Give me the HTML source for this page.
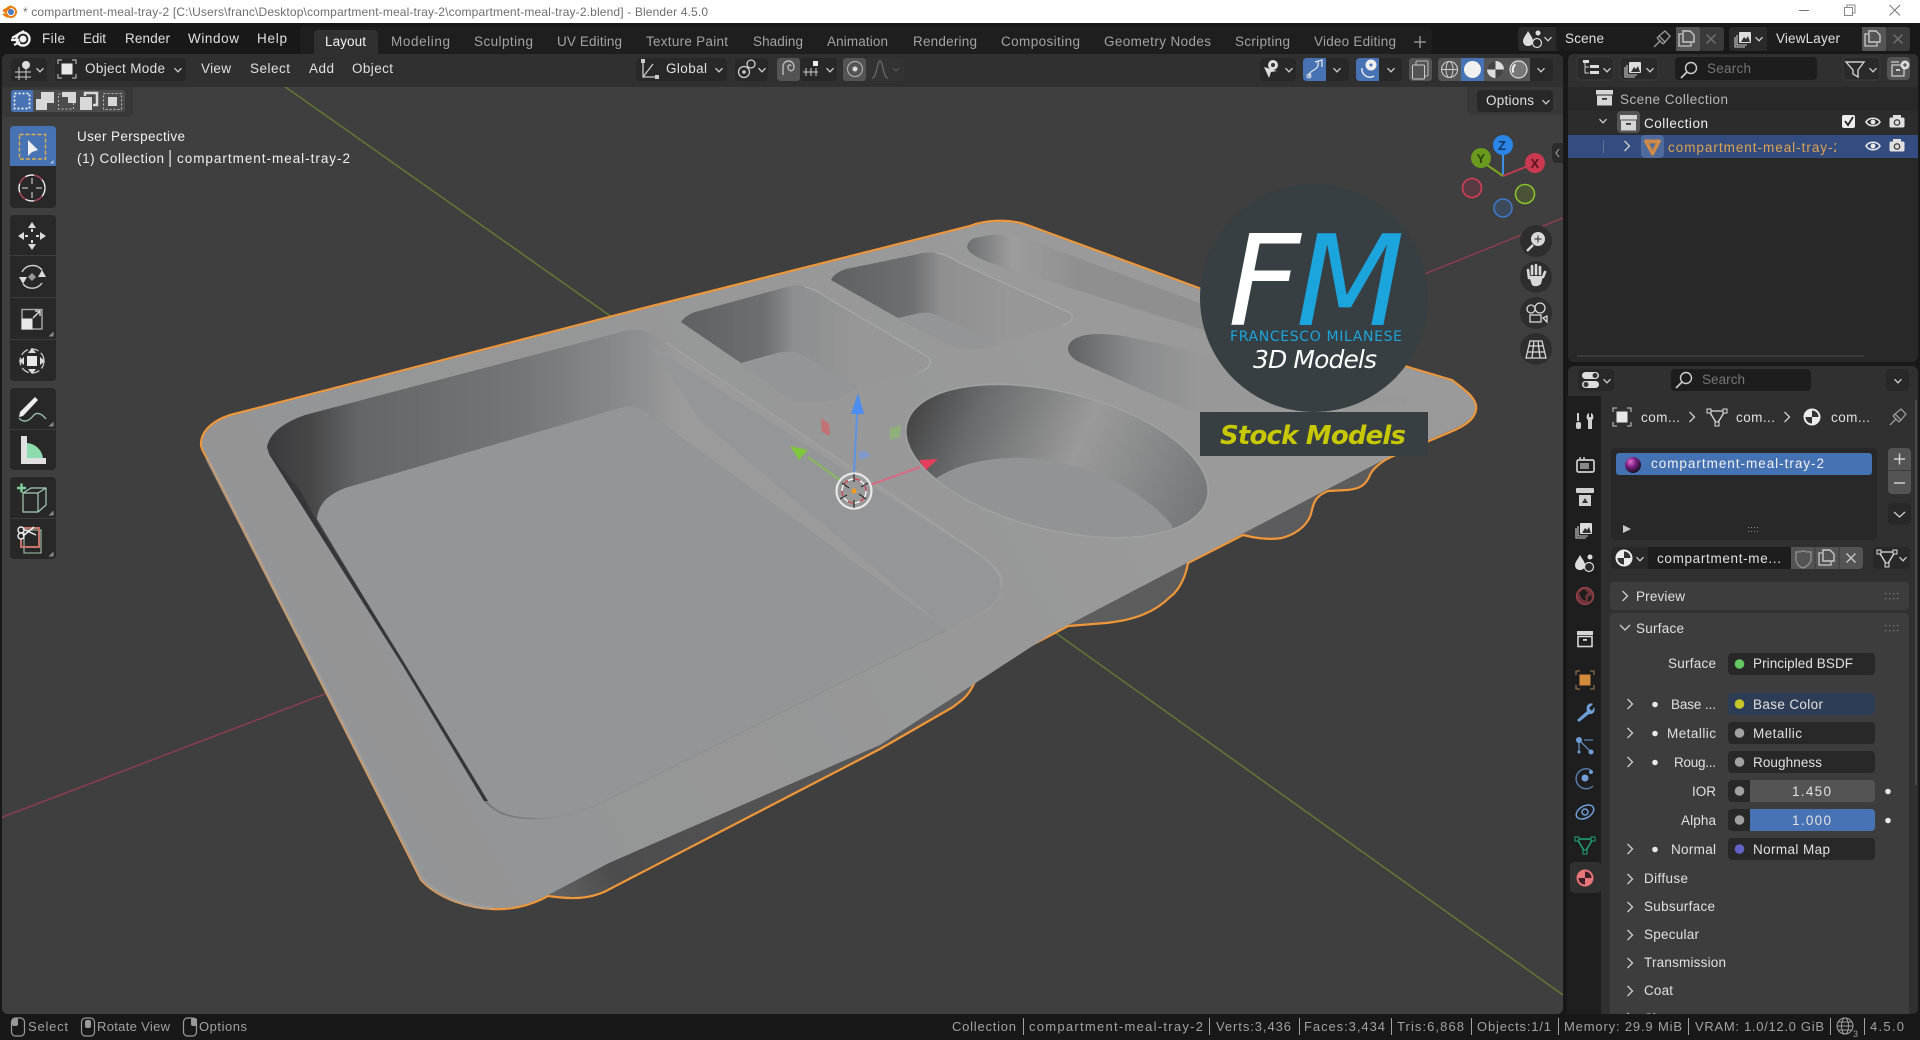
<!DOCTYPE html>
<html><head><meta charset="utf-8"><title>compartment-meal-tray-2 - Blender 4.5.0</title>
<style>
html,body{margin:0;padding:0;background:#181818;overflow:hidden}
svg{display:block;position:absolute;left:0;top:0}
text{font-family:"Liberation Sans",sans-serif;font-size:13.5px;fill:#d4d4d4;white-space:pre}
.m{fill:#e0e0e0}.tab{fill:#a3a3a3;font-size:13.5px}.dim{fill:#757575}.st{fill:#a2a2a2;font-size:13px}
.w{fill:#f0f0f0}
.i{fill:none;stroke:#d0d0d0;stroke-width:1.4}.f{fill:#d8d8d8;stroke:none}
</style></head><body>
<svg width="1920" height="1040" viewBox="0 0 1920 1040" xmlns="http://www.w3.org/2000/svg">
<defs>
<clipPath id="vp"><rect x="2" y="54" width="1561" height="960" rx="6"/></clipPath>
<clipPath id="cl"><rect x="1660" y="135" width="176" height="24"/></clipPath>
<clipPath id="pc"><rect x="1601" y="396" width="317" height="618"/></clipPath>
<linearGradient id="wall" gradientUnits="userSpaceOnUse" x1="270" y1="0" x2="680" y2="0"><stop offset="0" stop-color="#3b3b3d"/><stop offset=".1" stop-color="#474748"/><stop offset=".22" stop-color="#656667"/><stop offset=".6" stop-color="#747576"/><stop offset=".85" stop-color="#88898b"/><stop offset="1" stop-color="#9b9b9b"/></linearGradient>
<linearGradient id="w1" gradientUnits="userSpaceOnUse" x1="685" y1="0" x2="860" y2="0"><stop offset="0" stop-color="#606162"/><stop offset=".45" stop-color="#6e6f70"/><stop offset=".62" stop-color="#8d8e8f"/><stop offset="1" stop-color="#979797"/></linearGradient>
<linearGradient id="w2" gradientUnits="userSpaceOnUse" x1="832" y1="0" x2="1010" y2="0"><stop offset="0" stop-color="#5f6061"/><stop offset=".45" stop-color="#6f7071"/><stop offset=".62" stop-color="#909091"/><stop offset="1" stop-color="#979797"/></linearGradient>
<linearGradient id="w3" gradientUnits="userSpaceOnUse" x1="967" y1="0" x2="1080" y2="0"><stop offset="0" stop-color="#6e6f70"/><stop offset=".4" stop-color="#9d9d9d"/><stop offset="1" stop-color="#8f8f90"/></linearGradient>
<linearGradient id="w4" gradientUnits="userSpaceOnUse" x1="1068" y1="0" x2="1200" y2="0"><stop offset="0" stop-color="#616263"/><stop offset=".5" stop-color="#8a8b8c"/><stop offset="1" stop-color="#989898"/></linearGradient>
<linearGradient id="wc" gradientUnits="userSpaceOnUse" x1="906" y1="430" x2="1208" y2="480"><stop offset="0" stop-color="#454546"/><stop offset=".2" stop-color="#6a6b6c"/><stop offset=".55" stop-color="#9a9a9a"/><stop offset=".85" stop-color="#828384"/><stop offset="1" stop-color="#767778"/></linearGradient>
<linearGradient id="top" gradientUnits="userSpaceOnUse" x1="200" y1="800" x2="1100" y2="300"><stop offset="0" stop-color="#929394"/><stop offset="1" stop-color="#9a9a9a"/></linearGradient>
<linearGradient id="edge" gradientUnits="userSpaceOnUse" x1="520" y1="900" x2="1380" y2="500"><stop offset="0" stop-color="#6e6e6f"/><stop offset=".1" stop-color="#4c4c4d"/><stop offset=".55" stop-color="#5e5e5f"/><stop offset="1" stop-color="#5c5c5d"/></linearGradient>
<radialGradient id="sph" cx=".35" cy=".3" r=".75"><stop offset="0" stop-color="#e070d0"/><stop offset=".45" stop-color="#7a1f80"/><stop offset="1" stop-color="#10101a"/></radialGradient>
<path id="cd" d="M-3.5,-1.8 L0,1.8 L3.5,-1.8" fill="none" stroke="#cfcfcf" stroke-width="1.3"/>
<path id="cr" d="M-2.5,-5 L2.5,0 L-2.5,5" fill="none" stroke="#cfcfcf" stroke-width="1.3"/>
<g id="eye"><path d="M-7,0 C-4,-5 4,-5 7,0 C4,5 -4,5 -7,0Z" fill="none" stroke="#e8e8e8" stroke-width="1.6"/><circle r="2.4" fill="#e8e8e8"/></g>
<g id="cam"><rect x="-7.5" y="-4.5" width="15" height="10" rx="1.5" fill="#e0e0e0"/><rect x="-4" y="-7" width="8" height="3" fill="#e0e0e0"/><circle r="3.4" cy=".5" fill="#444"/><circle r="2" cy=".5" fill="#ddd"/></g>
<g id="coll"><rect x="-8" y="-8" width="17" height="4.500" fill="#d6d6d6"/><rect x="-7" y="-2.500" width="15" height="10" fill="#d6d6d6"/><rect x="-2" y="0" width="5" height="1.800" fill="#333"/></g>
<g id="tri"><path d="M-8,-6 L8,-6 L0,7 Z" fill="none" stroke="#ddd" stroke-width="1.3"/><rect x="-10" y="-8" width="4" height="4" fill="#333" stroke="#ddd"/><rect x="6" y="-8" width="4" height="4" fill="#333" stroke="#ddd"/><rect x="-2" y="5" width="4" height="4" fill="#333" stroke="#ddd"/></g>
<g id="mat"><circle r="8.500" fill="#ececec"/><path d="M0,0 L0,-6.500 A6.500,6.500 0 0 1 6.500,0 Z" fill="#333"/><path d="M0,0 L0,6.500 A6.500,6.500 0 0 1 -6.500,0 Z" fill="#333"/></g>
<g id="dup"><path d="M-5,-5 L-8,-5 L-8,7 L4,7 L4,4" fill="none" stroke="#c8c8c8" stroke-width="1.3"/><path d="M-4,-8 L3,-8 L7,-4 L7,3 L-4,3Z" fill="none" stroke="#c8c8c8" stroke-width="1.4"/></g>
<path id="x" d="M-4.500,-4.500 L4.500,4.500 M4.500,-4.500 L-4.500,4.500" fill="none" stroke="#c8c8c8" stroke-width="1.4"/>
<path id="pin" d="M-8,8 L-2,2 M-5,-1 L1,5 M-3,-3 L3,-8 L8,-3 L3,3 Z M-5,-1 L-3,-3 M1,5 L3,3" fill="none" stroke="#9a9a9a" stroke-width="1.3"/>
<g id="mag"><circle cx="2" cy="-2" r="5.500" fill="none" stroke="#cfcfcf" stroke-width="1.4"/><path d="M-2,2 L-8,8" stroke="#cfcfcf" stroke-width="1.6"/></g>
<g id="vl"><rect x="-5" y="-7" width="12" height="11" rx="1" fill="#ddd"/><path d="M-3,3 L0,-2 L2,0 L4,-3 L6,3Z" fill="#333"/><path d="M-7,-4 L-7,6 L3,6 M-9,-2 L-9,8 L1,8" fill="none" stroke="#ccc" stroke-width="1.1"/></g>
<g id="scn"><path d="M-5,-8 C-2,-3 0,-1 0,2 C0,6 -3,7 -5,7 C-8,7 -10,5 -10,2 C-10,-1 -7,-4 -5,-8Z" fill="#ddd"/><circle cx="4" cy="4" r="4.500" fill="#282828" stroke="#ddd" stroke-width="1.200"/><circle cx="5" cy="-6" r="2.500" fill="#ddd"/></g>
<g id="objm"><path d="M-9,-5 V-9 H-5 M5,-9 H9 V-5 M9,5 V9 H5 M-5,9 H-9 V5" fill="none" stroke="#aaa" stroke-width="1.300"/><rect x="-5.500" y="-5.500" width="11" height="11" fill="#e8e8e8"/></g>
<g id="grip" fill="#7a7a7a"><rect x="-10" y="-3" width="1.300" height="1.300"/><rect x="-6" y="-3" width="1.300" height="1.300"/><rect x="-2" y="-3" width="1.300" height="1.300"/><rect x="2" y="-3" width="1.300" height="1.300"/><rect x="-10" y="2" width="1.300" height="1.300"/><rect x="-6" y="2" width="1.300" height="1.300"/><rect x="-2" y="2" width="1.300" height="1.300"/><rect x="2" y="2" width="1.300" height="1.300"/></g>
<path id="corner" d="M2.500,-2.500 L2.500,2.500 L-2.500,2.500 Z" fill="#8a8a8a"/>
<g id="mouse"><rect x="-6.500" y="-9" width="13" height="18" rx="4" fill="none" stroke="#9a9a9a" stroke-width="1.200"/></g>
</defs>

<!-- base -->
<rect width="1920" height="1040" fill="#181818"/>
<rect width="1920" height="23" fill="#fff"/>
<!-- title bar -->
<g transform="translate(10,12)"><circle r="3" cx="1" cy="0" fill="#4a7cc0"/><circle r="5" cx="1" fill="none" stroke="#e87d0d" stroke-width="2"/><path d="M-7,-1 L1,-6 M-7,2 L-2,5 M-6,0 L0,-4" stroke="#e87d0d" stroke-width="2"/></g>
<text x="23" y="16" style="font-size:12px;fill:#6e6e6e" textLength="685">* compartment-meal-tray-2 [C:\Users\franc\Desktop\compartment-meal-tray-2\compartment-meal-tray-2.blend] - Blender 4.5.0</text>
<path d="M1799,10.500 H1809" stroke="#777" stroke-width="1"/>
<rect x="1844.500" y="7.500" width="8" height="8" fill="#fff" stroke="#888"/><path d="M1847,7 V5 H1855 V13 H1853" fill="none" stroke="#888"/>
<path d="M1889.500,5 L1900,15.500 M1900,5 L1889.500,15.500" stroke="#777" stroke-width="1"/>

<!-- top bar -->
<g transform="translate(21,39)"><circle r="3.500" cx="2" fill="#f0f0f0"/><circle r="6.500" cx="2" fill="none" stroke="#f0f0f0" stroke-width="2.400"/><path d="M-9,-1 L3,-8 M-10,1 L-2,1 M-7,6 L-1,3" stroke="#f0f0f0" stroke-width="2.200"/></g>
<text class="m" x="42" y="43" textLength="23">File</text>
<text class="m" x="83" y="43" textLength="23">Edit</text>
<text class="m" x="125" y="43" textLength="45">Render</text>
<text class="m" x="188" y="43" textLength="51">Window</text>
<text class="m" x="257" y="43" textLength="30">Help</text>
<rect x="300" y="27" width="1132" height="27" rx="3" fill="#1e1e1e"/>
<path d="M314,54 V34 Q314,30 318,30 H374 Q378,30 378,34 V54Z" fill="#303030"/>
<text x="325" y="46" class="m" style="fill:#f2f2f2" textLength="41">Layout</text>
<text class="tab" x="391" y="46" textLength="59">Modeling</text>
<text class="tab" x="474" y="46" textLength="59">Sculpting</text>
<text class="tab" x="557" y="46" textLength="65">UV Editing</text>
<text class="tab" x="646" y="46" textLength="82">Texture Paint</text>
<text class="tab" x="753" y="46" textLength="50">Shading</text>
<text class="tab" x="827" y="46" textLength="61">Animation</text>
<text class="tab" x="913" y="46" textLength="64">Rendering</text>
<text class="tab" x="1001" y="46" textLength="79">Compositing</text>
<text class="tab" x="1104" y="46" textLength="107">Geometry Nodes</text>
<text class="tab" x="1235" y="46" textLength="55">Scripting</text>
<text class="tab" x="1314" y="46" textLength="82">Video Editing</text>
<path d="M1414,42 H1426 M1420,36 V48" stroke="#a0a0a0" stroke-width="1.300"/>

<!-- scene selectors -->
<rect x="1518" y="27" width="206" height="24" rx="4" fill="#2a2a2a"/>
<use href="#scn" x="1533" y="39"/><use href="#cd" x="1548" y="39"/>
<rect x="1556" y="27" width="120" height="24" fill="#1d1d1d"/>
<text class="m" x="1565" y="43" textLength="39">Scene</text>
<use href="#pin" x="1662" y="39"/>
<rect x="1676" y="27" width="24" height="24" fill="#555"/><use href="#dup" x="1687" y="39"/>
<rect x="1700" y="27" width="24" height="24" rx="3" fill="#3a3a3a"/><use href="#x" x="1711" y="39" opacity=".4"/>
<rect x="1729" y="27" width="181" height="24" rx="4" fill="#2a2a2a"/>
<use href="#vl" x="1744" y="39"/><use href="#cd" x="1759" y="39"/>
<rect x="1767" y="27" width="95" height="24" fill="#1d1d1d"/>
<text class="m" x="1776" y="43" textLength="64">ViewLayer</text>
<rect x="1862" y="27" width="24" height="24" fill="#555"/><use href="#dup" x="1873" y="39"/>
<rect x="1886" y="27" width="24" height="24" rx="3" fill="#3a3a3a"/><use href="#x" x="1898" y="39" opacity=".4"/>

<!-- VIEWPORT -->
<rect x="2" y="54" width="1561" height="960" rx="6" fill="#3f3f3f"/>
<g clip-path="url(#vp)">
<path d="M284,86 L650,344" stroke="#5f7537" stroke-width="1.600"/>
<path d="M1053,631 L1563,995" stroke="#5f7537" stroke-width="1.600"/>
<path d="M0,818 L330,692" stroke="#853e4e" stroke-width="1.600"/>
<path d="M1400,284 L1563,218" stroke="#853e4e" stroke-width="1.600"/>

<!-- tray silhouette with side walls -->
<path d="M201,444 C201,430 215,418 238,413 L640,309 L970,226 C985,220 1010,218 1030,226 L1199,288 L1408,367 L1452,380 C1468,392 1478,400 1476,410 C1474,420 1465,425 1455,430 L1391,457 C1380,462 1372,470 1370,475 C1366,485 1360,489 1347,490 L1328,491 C1318,495 1314,500 1312,510 C1310,522 1300,533 1282,538 C1270,540 1255,538 1243,535 L1188,563 C1186,575 1180,590 1170,597 C1155,612 1135,620 1106,623 L1068,626 L1051,635 L980,672 C975,680 972,692 962,700 L953,707 L880,749 L604,892 C590,898 575,900 548,896 C530,906 510,910 492,909 C470,908 440,900 421,880 L327,694 L207,458 C203,452 201,448 201,444Z" fill="url(#edge)" stroke="#f0973a" stroke-width="2.200" stroke-linejoin="round"/>
<!-- top face -->
<path d="M202,444 C202,431 216,419 238,414 L640,310 L970,227 C985,221 1010,219 1030,227 L1199,289 L1408,368 L1452,381 C1467,393 1477,400 1475,410 C1473,419 1464,424 1454,429 L1391,456 L1051,634 L880,745 L609,863 L548,895 C530,905 510,909 492,908 C470,907 441,899 422,879 L328,694 L208,458 C204,452 202,448 202,444Z" fill="url(#top)"/>
<path d="M207,458 L328,694 L422,879 C441,899 470,907 492,908" fill="none" stroke="#a2a3a4" stroke-width="4" opacity=".55"/>

<!-- large compartment -->
<path d="M267,447 C270,432 285,422 305,415 L625,331 C640,327 655,332 667,343 L969,547 C990,562 1002,570 1002,585 C1002,600 995,605 985,612 L947,630 L626,790 C600,805 570,818 533,819 C510,819 497,815 484,801 L403,666 L314,525 L269,454Z" fill="url(#wall)"/>
<path d="M650,345 L969,549 C988,562 1000,572 1000,585 C1000,598 993,604 983,611 L947,630 L700,420Z" fill="#959697"/>
<path d="M317,519 C318,505 327,495 345,488 L620,408 C630,405 640,406 650,415 L947,630 L600,805 C575,817 540,820 520,817 C505,815 495,810 486,800Z" fill="#949596"/>
<path d="M269,454 L403,666 L484,801 L488,801 L405,664 L316,520 L300,490Z" fill="#363638"/>
<path d="M667,343 L969,547 C990,562 1002,570 1002,585" fill="none" stroke="#a8a9a9" stroke-width="1.500" opacity=".6"/>
<path d="M947,630 L626,790 C600,805 570,818 533,819 C515,819 500,815 488,803" fill="none" stroke="#89898a" stroke-width="1.400" opacity=".45"/>
<path d="M650,415 L947,630" fill="none" stroke="#8f9090" stroke-width="1" opacity=".3"/>

<!-- compartment 1 -->
<path d="M681,322 C684,317 690,314 695,312 L783,288 C793,285 800,285 805,287 C815,289 820,293 826,297 L928,357 C932,361 932,368 917,373 L859,387 C840,398 825,404 815,402 C800,402 793,400 788,398 L741,363Z" fill="url(#w1)"/>
<path d="M741,363 L777,353 C785,351 793,351 799,353 L859,387 C840,398 825,404 815,402 C800,402 793,400 788,398Z" fill="#949596"/>
<path d="M805,287 C815,289 820,293 826,297 L928,357 C932,361 932,368 917,373" fill="none" stroke="#a6a7a7" stroke-width="1.300"/>
<!-- compartment 2 -->
<path d="M831,280 C834,274 840,271 846,269 L914,255 C925,252 930,252 936,253 C945,254 952,258 958,262 L1068,312 C1075,316 1074,322 1062,325 L999,343 C985,349 975,350 965,349 C960,349 956,348 953,347 L898,318Z" fill="url(#w2)"/>
<path d="M898,318 L920,313 C928,312 932,313 936,315 L999,343 C985,349 975,350 965,349 C960,349 956,348 953,347Z" fill="#949596"/>
<path d="M936,253 C945,254 952,258 958,262 L1068,312 C1075,316 1074,322 1062,325" fill="none" stroke="#a6a7a7" stroke-width="1.300"/>
<!-- compartment 3 -->
<path d="M967,247 C968,241 972,238 980,237 C990,234 1010,234 1024,238 L1240,318 L1210,332 L991,263 C978,258 968,253 967,247Z" fill="url(#w3)"/>
<!-- compartment 4 -->
<path d="M1068,348 C1069,342 1074,338 1082,336 C1092,333 1110,333 1134,338 L1405,398 C1410,404 1405,410 1397,407 L1188,410 L1079,362 C1072,358 1068,354 1068,348Z" fill="url(#w4)"/>
<!-- round compartment -->
<ellipse cx="1057" cy="461" rx="154" ry="68" transform="rotate(14 1057 461)" fill="url(#wc)"/>
<clipPath id="ec"><ellipse cx="1057" cy="461" rx="154" ry="68" transform="rotate(14 1057 461)"/></clipPath>
<path clip-path="url(#ec)" d="M922,490 C945,466 985,456 1030,458 C1090,463 1140,488 1172,525 L1172,560 L922,560Z" fill="#929394"/>
<ellipse cx="1057" cy="461" rx="155" ry="69" transform="rotate(14 1057 461)" fill="none" stroke="#a5a6a6" stroke-width="1.400" opacity=".6"/>

<!-- 3D gizmo -->
<path d="M854,473 L857,413" stroke="#5f93e8" stroke-width="2"/><path d="M858,393 L851,414 L864,414Z" fill="#4c8df0"/>
<path d="M840,480 L808,457" stroke="#89b95a" stroke-width="2"/><path d="M790,446 L808,450 L799,460Z" fill="#7fc63c"/>
<path d="M870,485 L920,467" stroke="#d86a82" stroke-width="2"/><path d="M938,459 L919,460 L926,470Z" fill="#e43f5c"/>
<path d="M821,418 L829,424 L830,436 L822,432Z" fill="#c96a6f" opacity=".85"/>
<path d="M890,428 L901,425 L900,437 L890,440Z" fill="#8fb378" opacity=".9"/>
<path d="M858,452 L865,451 L871,456 L860,460Z" fill="#7c98d6" opacity=".85"/>
<circle cx="854" cy="491" r="17.500" fill="#a3a3a3" fill-opacity=".3" stroke="#e8e8e8" stroke-width="2.200"/>
<circle cx="854" cy="491" r="12" fill="none" stroke="#fff" stroke-width="1.200" stroke-dasharray="7 5.500"/>
<circle cx="854" cy="491" r="12" fill="none" stroke="#d8404c" stroke-width="1.200" stroke-dasharray="5.500 7" stroke-dashoffset="-7"/>
<path d="M854,474 V482 M854,500 V508 M840,499 L847,495 M861,487 L868,483 M842,483 L849,488 M859,494 L866,499" stroke="#111" stroke-width="1"/>
<circle cx="854" cy="491" r="2.500" fill="#f59a1c"/>

<!-- logo -->
<circle cx="1314" cy="298" r="114" fill="#373f43"/>
<rect x="1200" y="412" width="228" height="44" fill="#373f43"/>
<text x="1228" y="325" style="font-family:'DejaVu Sans',sans-serif;font-style:italic;font-size:126px;fill:#fff">F</text>
<text x="1296" y="325" style="font-family:'DejaVu Sans',sans-serif;font-style:italic;font-size:126px;fill:#1ca5dc">M</text>
<text x="1230" y="341" textLength="172" style="font-family:'DejaVu Sans',sans-serif;font-size:14px;fill:#1ca5dc">FRANCESCO MILANESE</text>
<text x="1253" y="368" textLength="124" style="font-family:'DejaVu Sans',sans-serif;font-style:italic;font-size:25px;fill:#fff">3D Models</text>
<text x="1220" y="444" textLength="186" style="font-family:'DejaVu Sans',sans-serif;font-style:italic;font-weight:bold;font-size:26px;fill:#c8c800">Stock Models</text>

<!-- header bg -->
<rect x="0" y="54" width="1565" height="33" fill="#303030"/>
<path d="M0,87 H133 V111 Q133,117 127,117 H0Z" fill="#383838"/>
<path d="M1563,87 H1467 V109 Q1467,115 1473,115 H1563Z" fill="#383838"/>

<!-- header buttons -->
<rect x="11" y="58" width="36" height="23" rx="4" fill="#282828"/>
<g transform="translate(24,69)"><path d="M-9,3 H7 M-9,8 H7 M-5,-2 V11 M2,-2 V11" fill="none" stroke="#ccc"/><circle cx="2" cy="-4" r="4" fill="#ddd"/></g>
<use href="#cd" x="40" y="70"/>
<rect x="55" y="58" width="131" height="23" rx="4" fill="#282828"/>
<use href="#objm" x="67" y="69"/>
<text class="m" x="85" y="73" textLength="80">Object Mode</text><use href="#cd" x="178" y="70"/>
<text class="m" x="201" y="73" textLength="30">View</text>
<text class="m" x="250" y="73" textLength="40">Select</text>
<text class="m" x="309" y="73" textLength="25">Add</text>
<text class="m" x="352" y="73" textLength="41">Object</text>
<rect x="636" y="58" width="91" height="23" rx="4" fill="#282828"/>
<path d="M643,62 V77 H657 M643,77 L653,64" fill="none" stroke="#ccc" stroke-width="1.300"/><rect x="641" y="59" width="4" height="4" fill="#ccc"/><rect x="655" y="75" width="4" height="4" fill="#ccc"/>
<text class="m" x="666" y="73" textLength="41">Global</text><use href="#cd" x="719" y="70"/>
<rect x="735" y="58" width="33" height="23" rx="4" fill="#282828"/>
<circle cx="744" cy="72" r="5.500" fill="none" stroke="#ccc" stroke-width="1.300"/><circle cx="744" cy="72" r="1.800" fill="#ccc"/><circle cx="751" cy="64" r="4" fill="none" stroke="#ccc" stroke-width="1.300"/><use href="#cd" x="762" y="70"/>
<rect x="777" y="58" width="23" height="23" rx="3" fill="#545454"/>
<path d="M783,75 V67 C783,59 794,59 794,67 C794,72 788,72 788,67 C788,65 790,64 791,66" fill="none" stroke="#bbb" stroke-width="1.400"/>
<rect x="800" y="58" width="37" height="23" rx="3" fill="#282828"/>
<path d="M803,72 H818 M806,68 V76 M811,68 V76 M816,68 V76" stroke="#ccc"/><rect x="813" y="61" width="5" height="5" fill="#eee"/><use href="#cd" x="830" y="70"/>
<rect x="843" y="58" width="23" height="23" rx="3" fill="#545454"/><circle cx="855" cy="69" r="7.500" fill="none" stroke="#aaa" stroke-width="1.200"/><circle cx="855" cy="69" r="2.500" fill="#ddd"/>
<rect x="866" y="58" width="38" height="23" rx="3" fill="#333"/>
<path d="M872,78 C877,78 877,61 880,61 C883,61 883,78 888,78" fill="none" stroke="#6a6a6a" stroke-width="1.300"/><path d="M893,68 L896,71 L899,68" fill="none" stroke="#5e5e5e"/>
<rect x="1260" y="58" width="36" height="23" rx="4" fill="#282828"/>
<circle cx="1273" cy="65" r="5" fill="#ddd"/><circle cx="1273" cy="65" r="2" fill="#333"/><path d="M1264,67 L1269,78 L1271,72 L1277,71Z" fill="#ddd"/><use href="#cd" x="1289" y="70"/>
<rect x="1303" y="58" width="46" height="23" rx="4" fill="#282828"/>
<path d="M1303,62 Q1303,58 1307,58 H1326 V81 H1307 Q1303,81 1303,77Z" fill="#4772b3"/>
<path d="M1309,77 C1309,68 1320,72 1318,61 M1315,62 L1322,60 L1322,67" fill="none" stroke="#e8e8e8" stroke-width="1.200"/><circle cx="1309" cy="76" r="2" fill="none" stroke="#e8e8e8"/><use href="#cd" x="1337" y="70"/>
<rect x="1356" y="58" width="46" height="23" rx="4" fill="#282828"/>
<path d="M1356,62 Q1356,58 1360,58 H1379 V81 H1360 Q1356,81 1356,77Z" fill="#4772b3"/>
<circle cx="1371" cy="65" r="5.500" fill="#eee"/><circle cx="1371" cy="65" r="1.500" fill="#4772b3"/><path d="M1362,68 A8,8 0 0 0 1374,76" fill="none" stroke="#eee" stroke-width="1.400"/><use href="#cd" x="1391" y="70"/>
<rect x="1409" y="58" width="23" height="23" rx="3" fill="#545454"/>
<rect x="1416" y="61" width="12" height="15" rx="1" fill="none" stroke="#bbb"/><rect x="1412.500" y="65" width="12" height="14" rx="1" fill="#545454" stroke="#ccc"/>
<rect x="1438" y="58" width="115" height="23" rx="4" fill="#282828"/>
<path d="M1438,62 Q1438,58 1442,58 H1461 V81 H1442 Q1438,81 1438,77Z" fill="#545454"/>
<rect x="1461" y="58" width="23" height="23" fill="#4772b3"/><rect x="1484" y="58" width="46" height="23" fill="#545454"/>
<g transform="translate(1449.500,69.500)"><circle r="8" fill="none" stroke="#ccc" stroke-width="1.100"/><ellipse rx="3.500" ry="8" fill="none" stroke="#ccc" stroke-width="1"/><path d="M-8,0 H8" stroke="#ccc"/></g>
<circle cx="1472.500" cy="69.500" r="8.500" fill="#f0f0f0"/>
<g transform="translate(1495.500,69.500)"><circle r="8.500" fill="#ddd"/><path d="M0,-8.500 A8.500,8.500 0 0 0 -8.500,0 L0,0Z M0,0 L0,8.500 A8.500,8.500 0 0 0 8.500,0Z" fill="#444"/></g>
<g transform="translate(1518.500,69.500)"><circle r="8.500" fill="#777" stroke="#ddd" stroke-width="1.200"/><path d="M-3,-5 A6,6 0 0 0 -5,3" fill="none" stroke="#eee" stroke-width="2"/></g>
<use href="#cd" x="1541" y="70"/>
<rect x="1477" y="90" width="76" height="22" rx="4" fill="#282828"/>
<text class="m" x="1486" y="105" textLength="48">Options</text><use href="#cd" x="1546" y="102"/>

<!-- select mode -->
<rect x="11" y="90" width="114" height="22" rx="3" fill="#4c4c4c"/>
<path d="M11,93 Q11,90 14,90 H33 V112 H14 Q11,112 11,109Z" fill="#4772b3"/>
<rect x="14.500" y="93.500" width="15" height="15" fill="none" stroke="#f4f4f4" stroke-width="1.700" stroke-dasharray="2 2"/>
<path d="M36,110 V99 H41 V92 H54 V103 H47 V110H36Z" fill="#d8d8d8"/>
<rect x="58.500" y="94" width="15" height="15" fill="none" stroke="#bbb" stroke-dasharray="2 2"/><path d="M62,92 H76 V103 H68 V97 H62Z" fill="#d8d8d8"/>
<rect x="80" y="97" width="12" height="13" fill="#d8d8d8"/><path d="M85,96 V93 H97 V105 H93" fill="none" stroke="#d8d8d8" stroke-width="2.500"/>
<rect x="103.500" y="93.500" width="18" height="16" fill="none" stroke="#bbb" stroke-dasharray="2 2"/><rect x="108" y="97" width="9" height="9" fill="#d8d8d8"/>

<!-- overlay text -->
<text class="w" x="77" y="141" textLength="108">User Perspective</text>
<text class="w" x="77" y="163" textLength="87">(1) Collection</text>
<rect x="169.500" y="150" width="1.200" height="17" fill="#f0f0f0"/>
<text class="w" x="177" y="163" textLength="173">compartment-meal-tray-2</text>

<!-- toolbar -->
<rect x="10" y="126" width="46" height="82" rx="4" fill="#282828"/>
<path d="M10,130 Q10,126 14,126 H52 Q56,126 56,130 V166 H10Z" fill="#4772b3"/>
<rect x="19.500" y="134.500" width="26" height="24.500" fill="none" stroke="#dfb050" stroke-width="1.400" stroke-dasharray="4 2"/>
<path d="M28,140 V156 L32,152 L38,150Z" fill="#f0f0f0"/><path d="M53.500,163.500 V160 L50,163.500Z" fill="#b8cbe6"/>
<circle cx="32" cy="188" r="13" fill="none" stroke="#eee" stroke-width="1.400" stroke-dasharray="9 9"/>
<circle cx="32" cy="188" r="13" fill="none" stroke="#b24a58" stroke-width="1.400" stroke-dasharray="9 9" stroke-dashoffset="9"/>
<path d="M32,178 V184 M32,192 V198 M22,188 H28 M36,188 H42" stroke="#bbb" stroke-width="1.300"/>
<rect x="10" y="215" width="46" height="166" rx="4" fill="#282828"/>
<path d="M10,255.500 H56 M10,297.500 H56 M10,339.500 H56" stroke="#3c3c3c"/>
<g fill="#dcdcdc"><path d="M32,222 L28,228 H36Z M32,250 L28,244 H36Z M18,236 L24,232 V240Z M46,236 L40,232 V240Z"/><path d="M31,229 h2 v3 h-2Z M31,240 h2 v3 h-2Z M25,235 h3 v2 h-3Z M36,235 h3 v2 h-3Z"/></g>
<path d="M22,272 A12,12 0 0 1 42,270 M42,283 A12,12 0 0 1 23,284" fill="none" stroke="#d0d0d0" stroke-width="1.400"/><path d="M32,273 L36,277 L32,281 L28,277Z" fill="#999"/><path d="M42,270 L38,277 H46Z M23,284 L19,277 H27Z" fill="#dcdcdc"/>
<rect x="22" y="309.500" width="20" height="19.500" fill="none" stroke="#aaa" stroke-width="1.400"/><rect x="21.500" y="318.500" width="11" height="11" fill="#e8e8e8"/><path d="M33,318 L40,311 M35,311 H40 V316" fill="none" stroke="#e8e8e8" stroke-width="1.300"/><use href="#corner" x="51" y="334"/>
<circle cx="32" cy="361" r="12" fill="none" stroke="#ccc" stroke-width="1.300" stroke-dasharray="8 3"/><rect x="27" y="356" width="10" height="10" fill="#e8e8e8"/><path d="M32,348 L28,353 H36Z M32,374 L28,369 H36Z M19,361 L24,357 V365Z M45,361 L40,357 V365Z" fill="#dcdcdc"/>
<rect x="10" y="388" width="46" height="82" rx="4" fill="#282828"/><path d="M10,429.500 H56" stroke="#3c3c3c"/>
<path d="M20,412 L35,397 L38,400 L23,416 L19,417Z" fill="#eee"/><path d="M19,418 C24,424 30,420 33,416 C37,411 42,414 46,419" fill="none" stroke="#9ec7ac" stroke-width="1.300"/><use href="#corner" x="51" y="424"/>
<path d="M27,443 A17,17 0 0 1 43,459 H27Z" fill="#8ddcb0"/>
<path d="M21,436 H27 V458 H46 V464 H21Z" fill="#e0e0e0"/>
<rect x="10" y="477" width="46" height="82" rx="4" fill="#282828"/><path d="M10,518.500 H56" stroke="#3c3c3c"/>
<path d="M23,493 H38 V512 H23Z M23,493 L31,488 H46 V505 L38,512 M38,493 L46,488" fill="none" stroke="#a6cbb4" stroke-width="1.200"/><path d="M17,488 H26 M21.500,483.500 V492.500" stroke="#7fd09a" stroke-width="2.400"/><use href="#corner" x="51" y="513"/>
<path d="M24,530 H41 V553 H24Z" fill="none" stroke="#a9c5b0" stroke-width="1.100"/><path d="M21,528 H39 V547 H21Z" fill="none" stroke="#c8736c" stroke-width="2"/><circle cx="21" cy="530" r="3" fill="#282828" stroke="#eee" stroke-width="1.400"/><circle cx="21" cy="536" r="3" fill="#282828" stroke="#eee" stroke-width="1.400"/><path d="M23,529 L36,535 M23,536 L34,527" stroke="#eee" stroke-width="1.500"/><use href="#corner" x="51" y="554"/>

<!-- nav gizmo -->
<path d="M1503,176 V155" stroke="#3b8fe6" stroke-width="2"/>
<path d="M1503,176 L1487,165" stroke="#7da51e" stroke-width="2"/>
<path d="M1503,176 L1528,166" stroke="#c23a50" stroke-width="2"/>
<circle cx="1503" cy="145" r="10" fill="#2a85e6"/><text x="1498" y="150" style="font-size:13px;font-weight:bold;fill:#123a66">Z</text>
<circle cx="1481" cy="158" r="10" fill="#6a9a1e"/><text x="1476.500" y="163" style="font-size:13px;font-weight:bold;fill:#2d4408">Y</text>
<circle cx="1535" cy="163" r="10" fill="#c93a50"/><text x="1530.500" y="168" style="font-size:13px;font-weight:bold;fill:#5b1320">X</text>
<circle cx="1472" cy="188" r="9.500" fill="#5a3a42" stroke="#d63e58" stroke-width="1.600"/>
<circle cx="1525" cy="194" r="9.500" fill="#4a5238" stroke="#8cc12c" stroke-width="1.600"/>
<circle cx="1503" cy="208" r="9" fill="#3c4a5c" stroke="#3f78c8" stroke-width="1.600"/>
<path d="M1552,148 Q1552,143 1557,143 H1563 V163 H1557 Q1552,163 1552,158Z" fill="#2c2c2c"/><path d="M1559,149 L1556,153 L1559,157" fill="none" stroke="#aaa"/>
<circle cx="1536" cy="241" r="16" fill="#2e2e2e"/>
<circle cx="1538" cy="239" r="7" fill="#d8d8d8"/><path d="M1533,245 L1527,251" stroke="#d8d8d8" stroke-width="2.400"/><path d="M1534.500,239 H1541.500 M1538,235.500 V242.500" stroke="#444" stroke-width="1.200"/>
<circle cx="1536" cy="277" r="16" fill="#2e2e2e"/>
<path d="M1529,278 L1528,270 M1532,274 V266 M1536,274 V265 M1540,274 V267 M1543,277 L1545,272" stroke="#d8d8d8" stroke-width="2.600" stroke-linecap="round"/><path d="M1529,276 H1543 L1541,284 Q1536,288 1532,285Z" fill="#d8d8d8"/>
<circle cx="1536" cy="313" r="16" fill="#2e2e2e"/>
<g fill="none" stroke="#d8d8d8" stroke-width="1.300"><circle cx="1531" cy="309" r="4"/><circle cx="1540" cy="308" r="5"/><rect x="1530" y="315" width="11" height="7"/><path d="M1543,318 L1547,316 V322Z"/></g>
<circle cx="1536" cy="349" r="16" fill="#2e2e2e"/>
<path d="M1530,341 H1542 L1546,358 H1526Z M1534,341 L1532,358 M1538,341 L1540,358 M1529,346 H1543 M1527,352 H1545" fill="none" stroke="#d8d8d8" stroke-width="1.300"/>
</g>

<!-- OUTLINER -->
<rect x="1568" y="54" width="350" height="308" rx="6" fill="#282828"/>
<path d="M1568,60 Q1568,54 1574,54 H1912 Q1918,54 1918,60 V87 H1568Z" fill="#303030"/>
<rect x="1577" y="57" width="37" height="23" rx="4" fill="#2a2a2a" stroke="#3a3a3a"/>
<path d="M1585,62 V73 H1589 M1585,67 H1589" fill="none" stroke="#ccc"/><rect x="1583" y="60" width="6" height="3" fill="#ddd"/><rect x="1590" y="65" width="9" height="3" fill="#ddd"/><rect x="1590" y="71" width="9" height="3" fill="#ddd"/><use href="#cd" x="1607" y="70"/>
<rect x="1620" y="57" width="38" height="23" rx="4" fill="#2a2a2a" stroke="#3a3a3a"/><use href="#vl" x="1634" y="69"/><use href="#cd" x="1650" y="70"/>
<rect x="1675" y="57" width="142" height="23" rx="4" fill="#1d1d1d"/><use href="#mag" x="1689" y="70"/>
<text class="dim" x="1707" y="73" textLength="44">Search</text>
<rect x="1843" y="57" width="37" height="23" rx="4" fill="#2a2a2a" stroke="#3a3a3a"/><path d="M1846,62 H1864 L1858,70 V77 L1853,74 V70Z" fill="none" stroke="#ccc" stroke-width="1.400"/><use href="#cd" x="1873" y="70"/>
<rect x="1887" y="57" width="23" height="23" rx="4" fill="#545454"/><path d="M1892,65 H1904 V76 H1892Z M1891,62 H1899" fill="none" stroke="#ccc" stroke-width="1.300"/><rect x="1896" y="69" width="4" height="2" fill="#ccc"/><circle cx="1905" cy="65" r="4.500" fill="#ddd"/><path d="M1903,65 h4 M1905,63 v4" stroke="#333"/>
<use href="#coll" x="1604" y="98"/>
<text x="1620" y="104" style="fill:#b8b8b8" textLength="108">Scene Collection</text>
<rect x="1568" y="111" width="350" height="24" fill="#2c2c2c"/>
<use href="#cd" x="1603" y="121"/>
<rect x="1617" y="111" width="23" height="22" rx="4" fill="#545454"/><use href="#coll" x="1628" y="123"/>
<text x="1644" y="128" style="fill:#eee" textLength="64">Collection</text>
<rect x="1842" y="115" width="13" height="13" rx="2" fill="#eee"/><path d="M1845,121 L1848,125 L1853,117" fill="none" stroke="#222" stroke-width="1.800"/>
<use href="#eye" x="1873" y="122"/><use href="#cam" x="1897" y="122"/>
<rect x="1568" y="135" width="350" height="23" fill="#334d80"/>
<path d="M1603.500,140 V153" stroke="#5d7099"/>
<use href="#cr" x="1627" y="146"/>
<rect x="1641" y="135" width="23" height="23" rx="4" fill="#4f6a9c"/><path d="M1645.500,141 H1659.500 L1652.500,154Z" fill="#b9884a" stroke="#d08a4a" stroke-width="3" stroke-linejoin="round"/><path d="M1649.500,143.500 H1655.500 L1652.500,149.500Z" fill="#4f6a9c"/>
<g clip-path="url(#cl)"><text x="1668" y="152" style="fill:#e0a24c" textLength="173">compartment-meal-tray-2</text></g>
<use href="#eye" x="1873" y="146"/><use href="#cam" x="1897" y="146"/>
<rect x="1577" y="355" width="287" height="2" fill="#3a3a3a"/>

<!-- PROPERTIES -->
<rect x="1568" y="366" width="350" height="648" rx="6" fill="#303030"/>
<rect x="1567" y="396" width="34" height="618" fill="#1e1e1e"/>
<rect x="1578" y="369" width="36" height="22" rx="4" fill="#282828"/>
<rect x="1582" y="372" width="17" height="7" rx="3.500" fill="#ddd"/><circle cx="1595" cy="375.500" r="2.500" fill="#333"/><rect x="1582" y="381" width="17" height="7" rx="3.500" fill="#ddd"/><circle cx="1586" cy="384.500" r="2.500" fill="#333"/><use href="#cd" x="1607" y="381"/>
<rect x="1671" y="369" width="140" height="22" rx="4" fill="#1d1d1d"/><use href="#mag" x="1684" y="380"/>
<text class="dim" x="1702" y="384" textLength="43">Search</text>
<rect x="1886" y="369" width="23" height="22" rx="4" fill="#282828"/><use href="#cd" x="1898" y="381"/>

<!-- nav tabs -->
<rect x="1570" y="862" width="31" height="31" rx="4" fill="#303030"/>
<g transform="translate(1585,421)"><path d="M4,-8 C1,-7 1,-2 3,-1 V8 H7 V-1 C9,-2 9,-7 6,-8 V-4 H4Z" fill="#d0d0d0"/><rect x="-8" y="-8" width="2" height="8" fill="#d0d0d0"/><rect x="-9" y="1" width="5" height="7" rx="2" fill="#d0d0d0"/></g>
<g transform="translate(1585,465)"><rect x="-8" y="-5" width="17" height="12" rx="1.500" fill="none" stroke="#d0d0d0" stroke-width="1.700"/><path d="M-5,-5 V-8 M-1,-5 V-8" stroke="#d0d0d0" stroke-width="1.500"/><rect x="-5" y="-2" width="9" height="6" fill="#d0d0d0" opacity=".6"/></g>
<g transform="translate(1585,497)"><rect x="-9" y="-9" width="18" height="5" rx="1" fill="#d0d0d0"/><rect x="-6" y="-2" width="12" height="11" fill="#d0d0d0"/><path d="M-3,6 L0,1 L3,6Z" fill="#333"/></g>
<use href="#vl" x="1585" y="530"/>
<use href="#scn" x="1585" y="563"/>
<g transform="translate(1585,596)"><circle r="8.500" fill="#6e343a" stroke="#a0444c" stroke-width="1.200"/><path d="M-6,-3 L-1,-7 L3,-3 L0,0 L1,5 L-3,3Z M3,1 L7,-1 L6,4 L3,6Z" fill="#1d1d1d"/></g>
<g transform="translate(1585,639)"><rect x="-8" y="-8" width="16" height="4" fill="#d6d6d6"/><rect x="-7" y="-2.500" width="14" height="10" fill="none" stroke="#d6d6d6" stroke-width="1.600"/><rect x="-2" y="0" width="4" height="1.800" fill="#d6d6d6"/></g>
<g transform="translate(1585,680)"><path d="M-9,-5 V-9 H-5 M5,-9 H9 V-5 M9,5 V9 H5 M-5,9 H-9 V5" fill="none" stroke="#8a6a48" stroke-width="1.300"/><rect x="-5.500" y="-5.500" width="11" height="11" fill="#d48a3c"/></g>
<path d="M1577,720 L1587,711 C1585,705 1590,702 1593,704 L1589,708 L1592,711 L1594,707 C1596,711 1593,715 1589,714 L1579,722Z" fill="#6f9ed8"/>
<g fill="#6f9ed8"><circle cx="1579" cy="740" r="3"/><circle cx="1591" cy="752" r="2.500"/><circle cx="1579" cy="752" r="1.500"/></g><path d="M1579,740 V752 M1579,740 L1591,752 M1584,740 H1593" stroke="#6f9ed8" stroke-width="1.100"/>
<circle cx="1585" cy="778" r="3.500" fill="#6f9ed8"/><path d="M1593,786 A10,10 0 1 1 1591,770" fill="none" stroke="#5a7aa8" stroke-width="1.500"/><circle cx="1591" cy="772" r="2" fill="#6f9ed8"/>
<g transform="translate(1585,812) rotate(-30)"><ellipse rx="9.500" ry="6" fill="none" stroke="#6f9ed8" stroke-width="1.500"/><circle r="3" fill="none" stroke="#6f9ed8" stroke-width="1.500"/></g>
<g transform="translate(1585,845)"><path d="M-8,-6 L8,-6 L0,7 Z" fill="none" stroke="#1fa672" stroke-width="1.500"/><g fill="#1d1d1d" stroke="#1fa672"><rect x="-10" y="-8" width="4" height="4"/><rect x="6" y="-8" width="4" height="4"/><rect x="-2" y="5" width="4" height="4"/></g></g>
<g transform="translate(1585,878)"><circle r="8.500" fill="#e8757a"/><path d="M0,0 L0,-6.500 A6.500,6.500 0 0 1 6.500,0 Z M0,0 L0,6.500 A6.500,6.500 0 0 1 -6.500,0 Z" fill="#3a2024"/></g>

<!-- breadcrumbs -->
<use href="#objm" x="1622" y="417"/>
<text class="m" x="1641" y="422" textLength="39">com...</text><use href="#cr" x="1692" y="417"/>
<use href="#tri" x="1717" y="417"/>
<text class="m" x="1736" y="422" textLength="39">com...</text><use href="#cr" x="1787" y="417"/>
<use href="#mat" x="1812" y="417"/>
<text class="m" x="1831" y="422" textLength="39">com...</text>
<use href="#pin" x="1898" y="417"/>

<!-- material slots -->
<rect x="1611" y="448" width="266" height="92" rx="5" fill="#282828"/>
<rect x="1616" y="453" width="256" height="22" rx="3" fill="#4472b3"/>
<circle cx="1633" cy="465" r="8" fill="url(#sph)"/>
<text x="1651" y="468" style="fill:#f0f0f0" textLength="173">compartment-meal-tray-2</text>
<path d="M1623,525 L1631,529 L1623,533Z" fill="#c8c8c8"/>
<g fill="#888"><rect x="1748" y="527" width="1" height="1"/><rect x="1751" y="527" width="1" height="1"/><rect x="1754" y="527" width="1" height="1"/><rect x="1757" y="527" width="1" height="1"/><rect x="1748" y="531" width="1" height="1"/><rect x="1751" y="531" width="1" height="1"/><rect x="1754" y="531" width="1" height="1"/><rect x="1757" y="531" width="1" height="1"/></g>
<rect x="1888" y="448" width="23" height="46" rx="4" fill="#545454"/><path d="M1888,470.500 H1911" stroke="#3c3c3c"/>
<path d="M1894,459 H1905 M1899.500,453.500 V464.500 M1894,483 H1905" stroke="#cfcfcf" stroke-width="1.500"/>
<rect x="1888" y="503" width="23" height="22" rx="4" fill="#282828"/><path d="M1894,512 L1899.500,517 L1905,512" fill="none" stroke="#cfcfcf" stroke-width="1.300"/>
<rect x="1611" y="547" width="252" height="22" rx="4" fill="#282828"/>
<use href="#mat" x="1624" y="558"/><use href="#cd" x="1640" y="559"/>
<rect x="1648" y="547" width="143" height="22" fill="#1d1d1d"/>
<text class="m" x="1657" y="563" textLength="124">compartment-me...</text>
<path d="M1791,547 H1859 Q1863,547 1863,551 V565 Q1863,569 1859,569 H1791Z" fill="#545454"/>
<path d="M1815,547 V569 M1839,547 V569" stroke="#3d3d3d"/>
<path d="M1796,552 Q1803,552 1803,550 Q1803,552 1811,552 V560 Q1809,566 1803,568 Q1797,566 1796,560Z" fill="none" stroke="#8e8e8e" stroke-width="1.400"/>
<use href="#dup" x="1827" y="558"/><use href="#x" x="1851" y="558"/>
<rect x="1873" y="547" width="37" height="22" rx="4" fill="#282828"/><use href="#tri" x="1887" y="558"/><use href="#cd" x="1903" y="559"/>

<!-- panels -->
<rect x="1610" y="582" width="299" height="28" rx="4" fill="#3d3d3d"/>
<use href="#cr" x="1625" y="596"/><text class="m" x="1636" y="601" textLength="49">Preview</text><use href="#grip" x="1895" y="596"/>
<path d="M1610,617 Q1610,613 1614,613 H1905 Q1909,613 1909,617 V1014 H1610Z" fill="#3d3d3d"/>
<path d="M1620,625 L1625,630 L1630,625" fill="none" stroke="#cfcfcf" stroke-width="1.300"/>
<text class="m" x="1636" y="633" textLength="48">Surface</text><use href="#grip" x="1895" y="628"/>
<rect x="1915" y="400" width="2" height="385" fill="#4a4a4a"/>

<g id="rows">
<text class="m" x="1668" y="668" textLength="48">Surface</text>
<rect x="1728" y="653" width="147" height="22" rx="4" fill="#282828"/><circle cx="1739.500" cy="664" r="4.800" fill="#63c763"/>
<text class="m" x="1753" y="668" textLength="100">Principled BSDF</text>

<use href="#cr" x="1630" y="704"/><circle cx="1655" cy="704.500" r="2.800" fill="#e8e8e8"/>
<text class="m" x="1671" y="709" textLength="45">Base ...</text>
<rect x="1728" y="693" width="147" height="22" rx="4" fill="#2d3d55"/><circle cx="1739.500" cy="704" r="4.800" fill="#c7c729"/>
<text class="m" x="1753" y="709" textLength="70">Base Color</text>

<use href="#cr" x="1630" y="733"/><circle cx="1655" cy="733.500" r="2.800" fill="#e8e8e8"/>
<text class="m" x="1667" y="738" textLength="49">Metallic</text>
<rect x="1728" y="722" width="147" height="22" rx="4" fill="#282828"/><circle cx="1739.500" cy="733" r="4.800" fill="#a1a1a1"/>
<text class="m" x="1753" y="738" textLength="49">Metallic</text>

<use href="#cr" x="1630" y="762"/><circle cx="1655" cy="762.500" r="2.800" fill="#e8e8e8"/>
<text class="m" x="1674" y="767" textLength="42">Roug...</text>
<rect x="1728" y="751" width="147" height="22" rx="4" fill="#282828"/><circle cx="1739.500" cy="762" r="4.800" fill="#a1a1a1"/>
<text class="m" x="1753" y="767" textLength="69">Roughness</text>

<text class="m" x="1692" y="796" textLength="24">IOR</text>
<rect x="1728" y="780" width="147" height="22" rx="4" fill="#282828"/>
<path d="M1750,780 H1871 Q1875,780 1875,784 V798 Q1875,802 1871,802 H1750Z" fill="#545454"/><circle cx="1739.500" cy="791" r="4.800" fill="#a1a1a1"/>
<text class="m" x="1792" y="796" textLength="39">1.450</text><circle cx="1888" cy="791.500" r="2.800" fill="#e8e8e8"/>

<text class="m" x="1681" y="825" textLength="35">Alpha</text>
<rect x="1728" y="809" width="147" height="22" rx="4" fill="#282828"/>
<path d="M1750,809 H1871 Q1875,809 1875,813 V827 Q1875,831 1871,831 H1750Z" fill="#4772b3"/><circle cx="1739.500" cy="820" r="4.800" fill="#a1a1a1"/>
<text class="m" x="1792" y="825" textLength="39">1.000</text><circle cx="1888" cy="820.500" r="2.800" fill="#e8e8e8"/>

<use href="#cr" x="1630" y="849"/><circle cx="1655" cy="849.500" r="2.800" fill="#e8e8e8"/>
<text class="m" x="1671" y="854" textLength="45">Normal</text>
<rect x="1728" y="838" width="147" height="22" rx="4" fill="#282828"/><circle cx="1739.500" cy="849" r="4.800" fill="#6363c7"/>
<text class="m" x="1753" y="854" textLength="77">Normal Map</text>

<use href="#cr" x="1630" y="879"/><text class="m" x="1644" y="883" textLength="44">Diffuse</text>
<use href="#cr" x="1630" y="907"/><text class="m" x="1644" y="911" textLength="71">Subsurface</text>
<use href="#cr" x="1630" y="935"/><text class="m" x="1644" y="939" textLength="55">Specular</text>
<use href="#cr" x="1630" y="963"/><text class="m" x="1644" y="967" textLength="82">Transmission</text>
<use href="#cr" x="1630" y="991"/><text class="m" x="1644" y="995" textLength="29">Coat</text>
<g clip-path="url(#pc)"><use href="#cr" x="1630" y="1018"/><text class="m" x="1644" y="1023" textLength="38">Sheen</text></g>
</g>

<!-- STATUS BAR -->
<rect x="0" y="1014" width="1920" height="26" fill="#181818"/>
<use href="#mouse" x="18" y="1027"/><rect x="12" y="1018" width="6" height="8" rx="2" fill="#9a9a9a"/>
<text class="st" x="28" y="1031" textLength="40">Select</text>
<use href="#mouse" x="88" y="1027"/><rect x="85" y="1020" width="6" height="8" rx="2" fill="#9a9a9a"/>
<text class="st" x="97" y="1031" textLength="73">Rotate View</text>
<use href="#mouse" x="190" y="1027"/><rect x="191" y="1018" width="6" height="8" rx="2" fill="#9a9a9a"/>
<text class="st" x="199" y="1031" textLength="48">Options</text>
<g fill="#a2a2a2"><rect x="1023" y="1018" width="1" height="17"/><rect x="1209" y="1018" width="1" height="17"/><rect x="1299" y="1018" width="1" height="17"/><rect x="1391" y="1018" width="1" height="17"/><rect x="1471" y="1018" width="1" height="17"/><rect x="1558" y="1018" width="1" height="17"/><rect x="1688" y="1018" width="1" height="17"/><rect x="1830" y="1018" width="1" height="17"/><rect x="1864" y="1018" width="1" height="17"/></g>
<text class="st" x="952" y="1031" textLength="64">Collection</text>
<text class="st" x="1029" y="1031" textLength="174">compartment-meal-tray-2</text>
<text class="st" x="1216" y="1031" textLength="75">Verts:3,436</text>
<text class="st" x="1304" y="1031" textLength="81">Faces:3,434</text>
<text class="st" x="1397" y="1031" textLength="67">Tris:6,868</text>
<text class="st" x="1477" y="1031" textLength="74">Objects:1/1</text>
<text class="st" x="1564" y="1031" textLength="118">Memory: 29.9 MiB</text>
<text class="st" x="1695" y="1031" textLength="129">VRAM: 1.0/12.0 GiB</text>
<g transform="translate(1845,1026)" fill="none" stroke="#a2a2a2" stroke-width="1"><circle r="8"/><ellipse rx="3.500" ry="8"/><path d="M-8,0 H8 M-7,-4 H7 M-7,4 H7"/></g>
<text class="st" x="1853" y="1037" style="font-size:9px">3</text>
<text class="st" x="1870" y="1031" textLength="34">4.5.0</text>
</svg>
</body></html>
